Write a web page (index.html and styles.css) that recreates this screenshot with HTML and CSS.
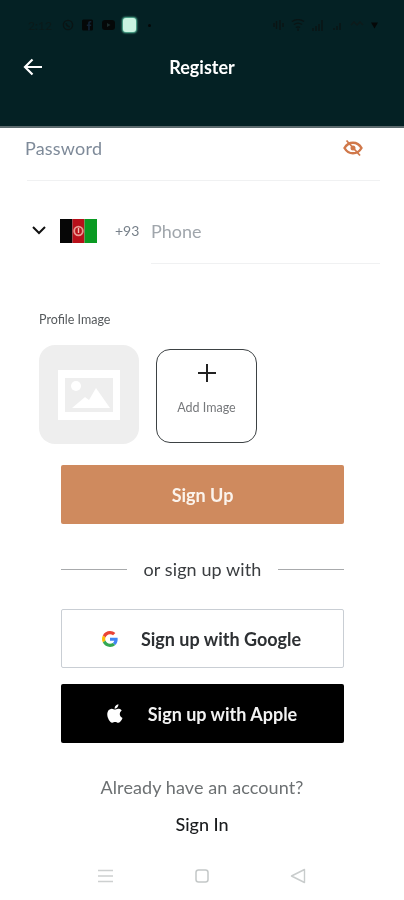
FILE: index.html
```html
<!DOCTYPE html>
<html lang="en">
<head>
<meta charset="utf-8">
<title>Register</title>
<link rel="stylesheet" href="styles.css">
</head>
<body>
<div class="screen">
  <header class="header">
    <div class="status">
      <div class="status-left">
        <span class="time">2:12</span>
        <svg class="st-icon" width="12" height="12" viewBox="0 0 12 12"><circle cx="6" cy="6" r="4.6" fill="none" stroke="#0a1414" stroke-width="1.4"/><path d="M4 4.2c.3 2 1.6 3.4 3.8 3.8" fill="none" stroke="#0a1414" stroke-width="1.3"/></svg>
        <svg class="st-icon" width="12" height="12" viewBox="0 0 12 12"><rect width="11" height="11" y=".5" rx="1.5" fill="#050808"/><path d="M7.8 11.5V7h1.4V5.4H7.8V4.3c0-.5.3-.8.8-.8h.7V2H8.200C6.900 2 6.100 2.900 6.100 4.100v1.300H4.800V7h1.300v4.500z" fill="#123"/></svg>
        <svg class="st-icon" width="13" height="10" viewBox="0 0 13 10"><rect width="13" height="10" rx="3" fill="#050808"/><path d="M5 3v4l3.500-2z" fill="#1c2c2c"/></svg>
        <span class="app-dot"></span>
        <span class="small-dot"></span>
      </div>
      <div class="status-right">
        <svg width="11" height="12" viewBox="0 0 11 12"><path d="M1 4v4M3.500 2v8M7 1v10M10 4v4" stroke="#0a1414" stroke-width="1.400" fill="none"/></svg>
        <svg width="14" height="12" viewBox="0 0 14 12"><path d="M1 2.500c3.500-2.500 8.500-2.500 12 0M3 5.500c2.500-1.800 5.500-1.800 8 0M5 8.500c1.300-.9 2.700-.9 4 0" stroke="#0a1414" stroke-width="1.300" fill="none"/><path d="M7 9.500v2.500" stroke="#0a1414" stroke-width="1.300"/></svg>
        <svg width="14" height="11" viewBox="0 0 14 11"><path d="M1 11V8M4 11V6M7 11V4M10 11V0" stroke="#0a1414" stroke-width="1.500"/></svg>
        <svg width="10" height="9" viewBox="0 0 10 9"><path d="M1 9V7M4 9V5M7 9V2" stroke="#0a1414" stroke-width="1.500"/></svg>
        <svg width="14" height="8" viewBox="0 0 14 8"><path d="M1 4l3-3 3 3 3-3 3 3" stroke="#0d1a1a" stroke-width="1.300" fill="none"/></svg>
        <svg width="7" height="7" viewBox="0 0 9 8"><path d="M0 0h9L4.500 8z" fill="#050808"/></svg>
      </div>
    </div>
    <div class="topbar">
      <svg class="back" width="20" height="18" viewBox="0 0 20 18"><path d="M19 9H2M9.500 1.500L2 9l7.500 7.500" fill="none" stroke="#fff" stroke-width="2.200"/></svg>
      <h1 class="title">Register</h1>
    </div>
  </header>

  <div class="password-row">
    <span class="password-label">Password</span>
    <svg class="eye" width="20" height="18" viewBox="0 0 20 18"><path d="M1.500 9C3.500 5.500 6.500 3.700 10 3.700S16.500 5.500 18.500 9c-2 3.500-5 5.300-8.500 5.300S3.500 12.500 1.500 9z" fill="none" stroke="#d0784a" stroke-width="2.400"/><circle cx="10" cy="9" r="2.500" fill="#d0784a"/><path d="M3.500 1.500l13.500 15" stroke="#d0784a" stroke-width="1.800"/></svg>
  </div>

  <div class="phone-row">
    <svg class="chevron" width="16" height="10" viewBox="0 0 16 10"><path d="M2 2l6 6 6-6" fill="none" stroke="#111" stroke-width="2"/></svg>
    <svg class="flag" width="37" height="24" viewBox="0 0 37 24"><rect width="12.500" height="24" fill="#060606"/><rect x="12.500" width="12" height="24" fill="#b8101a"/><rect x="24.500" width="12.500" height="24" fill="#0a9a22"/><circle cx="18.500" cy="12" r="4.300" fill="none" stroke="#e89a92" stroke-width="1.800"/><path d="M18.500 9v5" stroke="#f0c0b0" stroke-width="1.400"/></svg>
    <span class="dial">+93</span>
    <div class="phone-field">Phone</div>
  </div>

  <section class="profile">
    <div class="profile-label">Profile Image</div>
    <div class="tiles">
      <div class="placeholder">
        <svg width="62" height="50" viewBox="0 0 62 50"><path fill-rule="evenodd" d="M0 0h62v50H0zM7 8v34h48V8z" fill="#fff"/><circle cx="18" cy="16" r="5" fill="#fff"/><path d="M14 38l13-11 4 3 7-12 14 20z" fill="#fff"/></svg>
      </div>
      <div class="add-tile">
        <svg width="18" height="18" viewBox="0 0 18 18"><path d="M9 0v18M0 9h18" stroke="#222" stroke-width="2"/></svg>
        <span class="add-text">Add Image</span>
      </div>
    </div>
  </section>

  <div class="actions">
    <div class="btn btn-primary">Sign Up</div>
    <div class="divider"><span class="rule"></span><span class="divider-text">or sign up with</span><span class="rule"></span></div>
    <div class="btn btn-google">
      <svg width="16" height="16" viewBox="0 0 48 48"><path fill="#EA4335" d="M24 9.500c3.500 0 6.700 1.200 9.200 3.600l6.900-6.900C35.900 2.400 30.500 0 24 0 14.600 0 6.500 5.400 2.600 13.200l8 6.200C12.400 13.700 17.700 9.500 24 9.500z"/><path fill="#4285F4" d="M47 24.500c0-1.600-.1-3.100-.4-4.500H24v9h12.900c-.6 3-2.300 5.500-4.800 7.200l7.700 6C44.300 37.900 47 31.800 47 24.500z"/><path fill="#FBBC05" d="M10.500 28.600c-.5-1.400-.8-3-.8-4.600s.3-3.200.8-4.600l-8-6.200C.9 16.500 0 20.100 0 24s.9 7.500 2.600 10.800z"/><path fill="#34A853" d="M24 48c6.500 0 11.900-2.100 15.900-5.800l-7.700-6c-2.200 1.500-4.900 2.300-8.200 2.300-6.300 0-11.600-4.200-13.500-9.900l-8 6.200C6.500 42.600 14.600 48 24 48z"/></svg>
      <span>Sign up with Google</span>
    </div>
    <div class="btn btn-apple">
      <svg width="18" height="21" viewBox="0 0 24 28"><path fill="#fff" d="M19.700 14.800c0-3.100 2.500-4.600 2.600-4.700-1.400-2.100-3.700-2.400-4.400-2.400-1.900-.2-3.700 1.100-4.700 1.100-1 0-2.500-1.100-4-1.100-2.100 0-4 1.200-5.100 3.100-2.200 3.800-.6 9.400 1.600 12.500 1 1.500 2.300 3.200 3.900 3.100 1.600-.1 2.200-1 4.100-1s2.400 1 4.100 1c1.700 0 2.800-1.500 3.800-3 1.200-1.700 1.700-3.400 1.700-3.500-.1 0-3.500-1.300-3.600-5.100zM16.600 5.700c.9-1 1.400-2.500 1.300-3.900-1.300.1-2.800.9-3.700 1.900-.8.900-1.500 2.400-1.300 3.800 1.400.1 2.800-.7 3.700-1.800z"/></svg>
      <span>Sign up with Apple</span>
    </div>
  </div>

  <p class="already">Already have an account?</p>
  <p class="signin">Sign In</p>

  <nav class="sysnav">
    <svg width="15" height="14" viewBox="0 0 15 14"><path d="M0 1.500h15M0 7h15M0 12.500h15" stroke="#cdd0d0" stroke-width="1.700"/></svg>
    <svg width="14" height="14" viewBox="0 0 14 14"><rect x="1" y="1" width="12" height="12" rx="2.500" fill="none" stroke="#c4c8c8" stroke-width="1.500"/></svg>
    <svg width="16" height="16" viewBox="0 0 16 16"><path d="M14.500 1.500v13L1.500 8z" fill="none" stroke="#c8cccc" stroke-width="1.400" stroke-linejoin="round"/></svg>
  </nav>
</div>
</body>
</html>
```
FILE: styles.css
```css
* { box-sizing: border-box; }
html, body { margin: 0; padding: 0; background: #fff; }
body { font-family: Lato, "Open Sans", sans-serif; }
.screen { width: 404px; height: 900px; overflow: hidden; background: #fff; display: flex; flex-direction: column; filter: blur(0.6px); }

.header { height: 128px; background: #042124; border-bottom: 2px solid #5d6b6e; flex: none; }
.status { height: 14px; margin-top: 18px; padding: 0 26px 0 28px; display: flex; justify-content: space-between; align-items: center; filter: blur(0.5px); }
.status-left { display: flex; align-items: center; gap: 8px; }
.status-right { display: flex; align-items: center; gap: 7px; }
.time { font-size: 12px; color: #0b1a1a; width: 26px; }
.st-icon { flex: none; }
.app-dot { width: 13px; height: 14px; border-radius: 3px; background: #c9f3e1; box-shadow: 0 0 2px 1px #5fc6a4; }
.small-dot { width: 3px; height: 3px; border-radius: 50%; background: #050808; margin-left: 4px; }

.topbar { height: 28px; margin-top: 21px; padding-left: 23px; display: flex; align-items: center; position: relative; }
.back { flex: none; }
.title { position: absolute; left: 0; right: 0; margin: 0; text-align: center; color: #fff; font-size: 18px; font-weight: 700; line-height: 28px; }

.password-row { height: 53px; margin: 0 24px 0 27px; padding: 0 17px 12px 0; border-bottom: 1px solid #f0f1f2; display: flex; align-items: center; justify-content: space-between; flex: none; }
.password-label { font-size: 18px; letter-spacing: 0.2px; color: #7e8a99; margin-left: -2px; }
.eye { flex: none; }

.phone-row { height: 83px; display: flex; align-items: flex-start; padding: 38px 24px 0 31px; flex: none; }
.chevron { flex: none; margin-top: 6px; }
.flag { flex: none; margin-left: 13px; }
.dial { font-size: 14px; color: #77808a; margin-left: 18px; width: 36px; line-height: 24px; flex: none; }
.phone-field { flex: 1; height: 45px; font-size: 18px; color: #a0a6ac; line-height: 25px; border-bottom: 1px solid #f0f1f2; }

.profile { padding: 48px 0 0 39px; flex: none; }
.profile-label { font-size: 12.500px; line-height: 15px; color: #55595c; }
.tiles { display: flex; align-items: flex-start; gap: 17px; margin-top: 18px; }
.placeholder { width: 100px; height: 99px; border-radius: 16px; background: #eeeeee; display: flex; align-items: center; justify-content: center; }
.add-tile { width: 101px; height: 94px; margin-top: 4px; border: 1.500px solid #3d4244; border-radius: 14px; display: flex; flex-direction: column; align-items: center; padding-top: 14px; }
.add-text { font-size: 12.500px; color: #77797c; margin-top: 18px; }

.actions { margin: 21px 60px 0 61px; flex: none; }
.btn { height: 59px; border-radius: 2px; display: flex; align-items: center; justify-content: center; font-size: 18px; font-weight: 700; }
.btn-primary { background: #cf8a5e; color: #fbf3ec; }
.divider { display: flex; align-items: center; justify-content: space-between; height: 85px; padding-top: 5px; }
.rule { width: 66px; height: 1px; background: #a8aaac; }
.divider-text { font-size: 18px; letter-spacing: 0.1px; color: #3a3d40; }
.btn-google { background: #fff; border: 1.500px solid #c9ced4; color: #2d3033; gap: 23px; padding-right: 2px; }
.btn-apple { background: #000; color: #f2f2f2; margin-top: 16px; gap: 25px; padding-right: 3px; }

.already { margin: 33px 0 0; text-align: center; font-size: 18px; letter-spacing: 0.1px; line-height: 22px; color: #6c7072; flex: none; }
.signin { margin: 15px 0 0; text-align: center; font-size: 18px; line-height: 22px; color: #1a1c1e; font-weight: 500; flex: none; }

.sysnav { margin-top: 31px; height: 20px; padding: 0 98px; display: flex; align-items: center; justify-content: space-between; flex: none; }
```
